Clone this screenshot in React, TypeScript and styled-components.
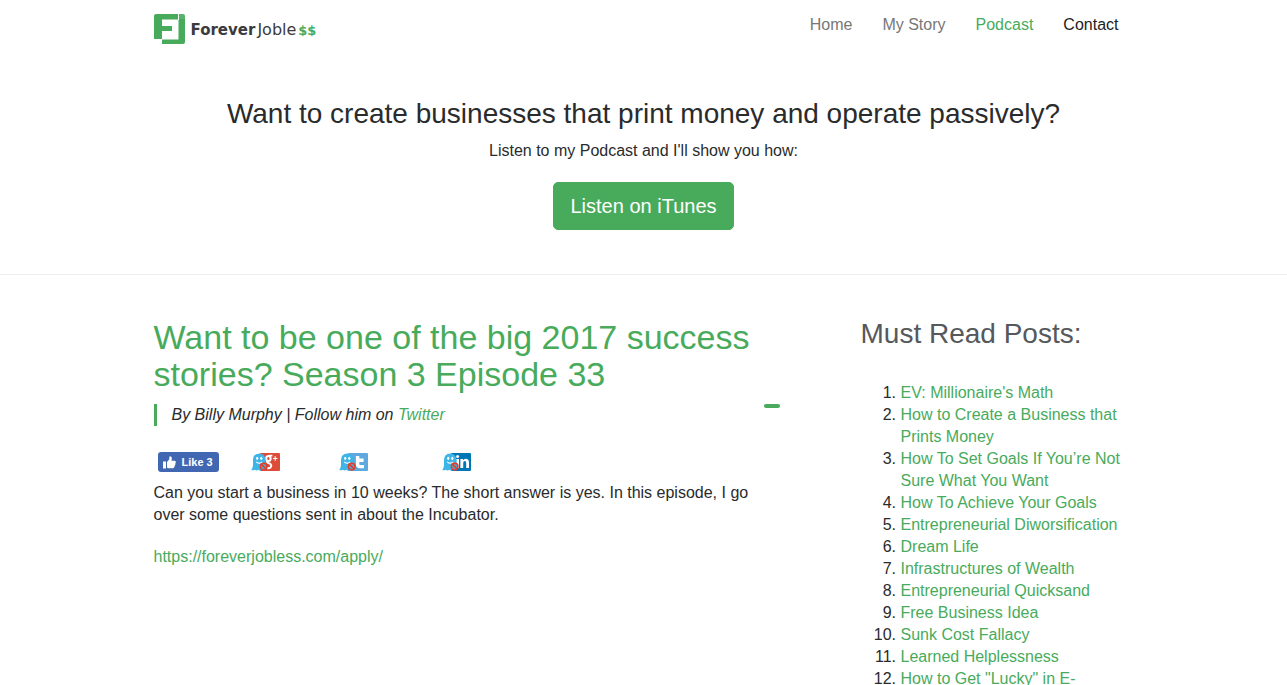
import React from "react";
import styled, { createGlobalStyle } from "styled-components";

const GREEN = "#48ab5c";

const GlobalStyle = createGlobalStyle`
  *, *::before, *::after { box-sizing: border-box; }
  body {
    margin: 0;
    background: #fff;
    color: #292b2c;
    font: 16px/22px "Liberation Sans", Arial, sans-serif;
  }
  a { color: ${GREEN}; text-decoration: none; }
  a:hover { text-decoration: underline; }
`;

const Container = styled.div`
  max-width: 1010px;
  margin: 0 auto;
  padding: 0 15px;
`;

const NavBar = styled(Container).attrs({ as: "header" })`
  display: flex;
  align-items: flex-start;
  justify-content: space-between;
  padding-top: 14px;
`;

const Brand = styled.a`
  display: flex;
  align-items: center;
  gap: 5px;
  height: 30px;
  && { color: #3b3b3d; text-decoration: none; }
`;

const Wordmark = styled.span`
  display: flex;
  align-items: baseline;
  font: 15px/30px "DejaVu Sans", sans-serif;
  padding-top: 2px;
`;

const Heavy = styled.b`
  font-size: 15px;
`;

const Joble = styled.span`
  padding: 0 2px;
  font-size: 16px;
`;

const Dollars = styled.b`
  color: ${GREEN};
  font-size: 13px;
`;

const NavLinks = styled.nav`
  display: flex;
  gap: 30px;
  padding-right: 15px;
`;

const NavLink = styled.a<{ $color: string }>`
  && { color: ${(p) => p.$color}; }
`;

const Hero = styled.section`
  border-bottom: 1px solid #eee;
  padding: 54px 15px 44px;
  text-align: center;
`;

const HeroTitle = styled.h2`
  margin: 0 0 11px;
  font-size: 28px;
  line-height: 31px;
  font-weight: 400;
`;

const HeroText = styled.p`
  margin: 0 0 20px;
`;

const ListenButton = styled.button`
  height: 48px;
  padding: 0 16px;
  border: 1px solid ${GREEN};
  border-radius: 5px;
  background: ${GREEN};
  color: #fff;
  font: inherit;
  font-size: 20px;
  cursor: pointer;
  display: block;
  margin: 0 auto;
`;

const Columns = styled(Container).attrs({ as: "main" })`
  display: flex;
  gap: 81px;
  padding-top: 43px;
`;

const Article = styled.article`
  flex: 1;
  min-width: 0;
`;

const ArticleTitle = styled.h1`
  margin: 1px 0 0;
  font-size: 34px;
  line-height: 37px;
  font-weight: 400;
`;

const BylineRow = styled.div`
  display: flex;
  align-items: flex-start;
  justify-content: space-between;
  margin-top: 11px;
`;

const Byline = styled.p`
  margin: 0;
  padding-left: 15px;
  border-left: 3px solid ${GREEN};
  font-style: italic;
  line-height: 22px;
`;

const Toggle = styled.button`
  width: 16px;
  height: 4px;
  padding: 0;
  border: 0;
  border-radius: 2px;
  background: ${GREEN};
  cursor: pointer;
`;

const ShareRow = styled.div`
  display: flex;
  align-items: center;
  margin: 26px 0 10px;
  padding-left: 4px;
`;

const LikeButton = styled.button`
  display: flex;
  align-items: center;
  gap: 6px;
  width: 61px;
  height: 20px;
  padding: 0 5px;
  border: 0;
  border-radius: 3px;
  background: #4267b2;
  color: #fff;
  font: bold 11px/20px "Liberation Sans", Arial, sans-serif;
  white-space: nowrap;
  cursor: pointer;
`;

const ShareButton = styled.button<{ $gap: number }>`
  display: block;
  margin-left: ${(p) => p.$gap}px;
  padding: 0;
  border: 0;
  background: none;
  line-height: 0;
  cursor: pointer;
`;

const Paragraph = styled.p`
  margin: 0 0 20px;
`;

const Sidebar = styled.aside`
  flex: 0 0 273px;
`;

const SidebarTitle = styled.h2`
  margin: 0;
  color: #55595c;
  font-size: 28px;
  line-height: 31px;
  font-weight: 400;
`;

const PostList = styled.ol`
  margin: 33px 0 0;
  padding: 0 0 0 40px;
`;

const LogoMark = () => (
  <svg width="32" height="30" viewBox="0 0 32 30" aria-hidden="true">
    <path fill={GREEN} d="M2 0H24V5H8V12H18V17H8V25H0V2Q0 0 2 0Z" />
    <path fill={GREEN} d="M25 5H31V28Q31 30 29 30H8V26H25Z" />
    <path fill={GREEN} d="M25 0H29Q31 0 31 2V5H25Z" opacity="0.9" />
    <path fill={GREEN} d="M8 5H24V6H8Z" opacity="0.5" />
    <path fill={GREEN} d="M24 6H25V26H24Z" opacity="0.5" />
    <path fill={GREEN} d="M8 25H25V26H8Z" opacity="0.5" />
  </svg>
);

const ThumbIcon = () => (
  <svg width="13" height="13" viewBox="0 0 13 13" aria-hidden="true">
    <path
      fill="#fff"
      d="M0 5.5H3V12.5H0ZM4 6 6.3 3.3V.9Q6.5.2 7.2.2 8.9.7 8.9 2.6L8.4 4.7H11.7Q13 4.9 12.8 6.3 12.9 7.1 12.3 7.5 12.7 8.6 11.9 9.3 12.1 10.4 11.2 10.9 11.2 12.3 9.8 12.3H5.4L4 11.7Z"
    />
  </svg>
);

type Network = "google" | "twitter" | "linkedin";
const networkColors: Record<Network, string> = {
  google: "#dd4b39",
  twitter: "#5ea9dd",
  linkedin: "#0077b5",
};

const GhostIcon = ({ network }: { network: Network }) => (
  <svg width="29" height="18" viewBox="0 0 29 18" aria-hidden="true">
    <rect x="9" width="20" height="18" rx="1" fill={networkColors[network]} />
    {network === "google" && (
      <g fill="none" stroke="#fff">
        <ellipse cx="17.4" cy="5.5" rx="2.2" ry="2.6" strokeWidth="2" />
        <path d="M18 2.6H21.4M16.2 8.2Q15.6 9.6 17.6 10.2 20.4 11 20.3 13 19.7 15.4 17 15.3 14.6 15.1 14.5 13.4" strokeWidth="1.9" />
        <path d="M24.2 3.3V7.7M22 5.5H26.4" strokeWidth="1.2" />
      </g>
    )}
    {network === "twitter" && (
      <path d="M18.6 3V11.2Q18.6 13.6 21.2 13.6H25M18.6 7.3H24.6" fill="none" stroke="#fff" strokeWidth="3.4" />
    )}
    {network === "linkedin" && (
      <g fill="#fff">
        <circle cx="15.6" cy="3.6" r="1.5" />
        <path d="M14.2 6H17V15H14.2ZM18.4 6H21V7.3Q22 5.8 23.9 5.8 27 6 27 9.6V15H24.2V10.2Q24.2 8.1 22.8 8.1 21.2 8.1 21.2 10.2V15H18.4Z" />
      </g>
    )}
    <path
      fill="#3db5e6"
      d="M2 7Q2.2 .4 8.2.4 14.4.6 14.5 7V16.5Q13 18 11.3 16.8 9.4 18.5 7.4 16.8 5.4 18.2 3.8 16.7 2 17.6.3 17 1.8 15 2 12Z"
    />
    <ellipse cx="6.2" cy="5.3" rx="1.1" ry="1.6" fill="#fff" />
    <ellipse cx="10.3" cy="5.3" rx="1.1" ry="1.6" fill="#fff" />
    <path d="M5.2 8.8Q8.2 11.6 11.3 8.8" fill="none" stroke="#fff" strokeWidth="1.1" />
    <circle cx="12.7" cy="13.6" r="3.3" fill="#58a3c4" stroke="#e23c2b" strokeWidth="1.5" />
    <path d="M10.5 11.4 14.9 15.8" stroke="#e23c2b" strokeWidth="1.5" />
  </svg>
);

const navItems = [
  { label: "Home", color: "#777" },
  { label: "My Story", color: "#777" },
  { label: "Podcast", color: GREEN },
  { label: "Contact", color: "#222" },
];

const posts = [
  "EV: Millionaire's Math",
  "How to Create a Business that Prints Money",
  "How To Set Goals If You’re Not Sure What You Want",
  "How To Achieve Your Goals",
  "Entrepreneurial Diworsification",
  "Dream Life",
  "Infrastructures of Wealth",
  "Entrepreneurial Quicksand",
  "Free Business Idea",
  "Sunk Cost Fallacy",
  "Learned Helplessness",
  'How to Get "Lucky" in E-',
];

export default function App() {
  return (
    <>
      <GlobalStyle />
      <NavBar>
        <Brand href="#">
          <LogoMark />
          <Wordmark>
            <Heavy>Forever</Heavy>
            <Joble>Joble</Joble>
            <Dollars>$$</Dollars>
          </Wordmark>
        </Brand>
        <NavLinks>
          {navItems.map((item) => (
            <NavLink key={item.label} href="#" $color={item.color}>
              {item.label}
            </NavLink>
          ))}
        </NavLinks>
      </NavBar>
      <Hero>
        <HeroTitle>Want to create businesses that print money and operate passively?</HeroTitle>
        <HeroText>Listen to my Podcast and I'll show you how:</HeroText>
        <ListenButton type="button">Listen on iTunes</ListenButton>
      </Hero>
      <Columns>
        <Article>
          <ArticleTitle>
            <a href="#">Want to be one of the big 2017 success stories? Season 3 Episode 33</a>
          </ArticleTitle>
          <BylineRow>
            <Byline>
              By Billy Murphy | Follow him on <a href="#">Twitter</a>
            </Byline>
            <Toggle type="button" aria-label="Collapse" />
          </BylineRow>
          <ShareRow>
            <LikeButton type="button">
              <ThumbIcon />
              Like 3
            </LikeButton>
            <ShareButton type="button" aria-label="Google+" $gap={32}>
              <GhostIcon network="google" />
            </ShareButton>
            <ShareButton type="button" aria-label="Twitter" $gap={59}>
              <GhostIcon network="twitter" />
            </ShareButton>
            <ShareButton type="button" aria-label="LinkedIn" $gap={74}>
              <GhostIcon network="linkedin" />
            </ShareButton>
          </ShareRow>
          <Paragraph>
            Can you start a business in 10 weeks? The short answer is yes. In this episode, I go over some
            questions sent in about the Incubator.
          </Paragraph>
          <Paragraph>
            <a href="#">https://foreverjobless.com/apply/</a>
          </Paragraph>
        </Article>
        <Sidebar>
          <SidebarTitle>Must Read Posts:</SidebarTitle>
          <PostList>
            {posts.map((post) => (
              <li key={post}>
                <a href="#">{post}</a>
              </li>
            ))}
          </PostList>
        </Sidebar>
      </Columns>
    </>
  );
}
